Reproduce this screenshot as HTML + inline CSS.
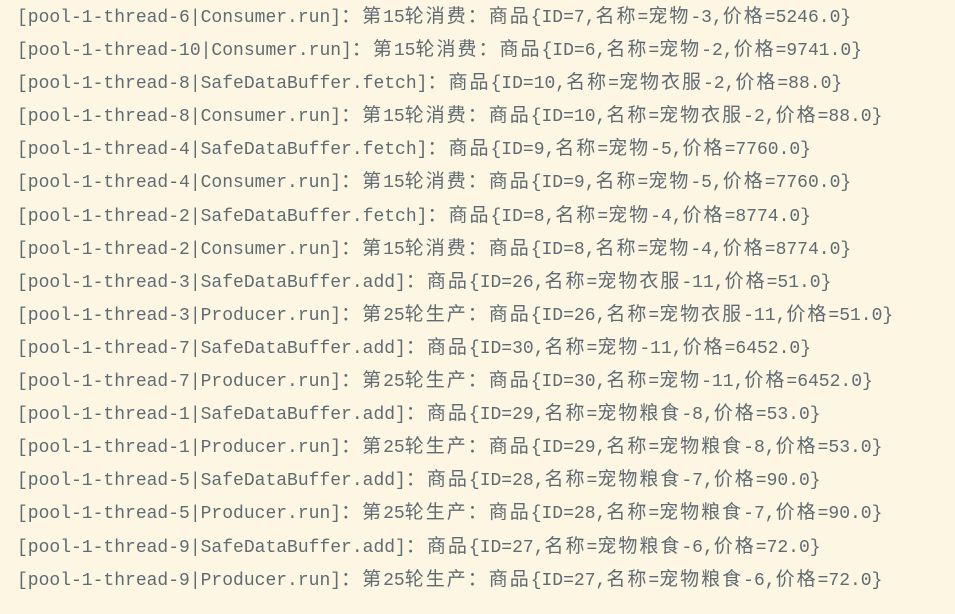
<!DOCTYPE html>
<html><head><meta charset="utf-8"><style>
html,body{margin:0;padding:0;background:#fdf6e3;width:955px;height:614px;overflow:hidden}
.w{position:absolute;left:17px;top:2px;font-family:"Liberation Mono","Noto Sans CJK SC",monospace;font-size:18px;color:#5f6b73}
.w div{height:33.1px;line-height:33px;white-space:nowrap}
.c{font-family:"Noto Sans CJK SC","WenQuanYi Zen Hei",sans-serif;font-size:19px;letter-spacing:2px;line-height:0}
</style></head><body><div class="w">
<div>[pool-1-thread-6|Consumer.run]<span class="c">：第</span>15<span class="c">轮消费：商品</span>{ID=7,<span class="c">名称</span>=<span class="c">宠物</span>-3,<span class="c">价格</span>=5246.0}</div>
<div>[pool-1-thread-10|Consumer.run]<span class="c">：第</span>15<span class="c">轮消费：商品</span>{ID=6,<span class="c">名称</span>=<span class="c">宠物</span>-2,<span class="c">价格</span>=9741.0}</div>
<div>[pool-1-thread-8|SafeDataBuffer.fetch]<span class="c">：商品</span>{ID=10,<span class="c">名称</span>=<span class="c">宠物衣服</span>-2,<span class="c">价格</span>=88.0}</div>
<div>[pool-1-thread-8|Consumer.run]<span class="c">：第</span>15<span class="c">轮消费：商品</span>{ID=10,<span class="c">名称</span>=<span class="c">宠物衣服</span>-2,<span class="c">价格</span>=88.0}</div>
<div>[pool-1-thread-4|SafeDataBuffer.fetch]<span class="c">：商品</span>{ID=9,<span class="c">名称</span>=<span class="c">宠物</span>-5,<span class="c">价格</span>=7760.0}</div>
<div>[pool-1-thread-4|Consumer.run]<span class="c">：第</span>15<span class="c">轮消费：商品</span>{ID=9,<span class="c">名称</span>=<span class="c">宠物</span>-5,<span class="c">价格</span>=7760.0}</div>
<div>[pool-1-thread-2|SafeDataBuffer.fetch]<span class="c">：商品</span>{ID=8,<span class="c">名称</span>=<span class="c">宠物</span>-4,<span class="c">价格</span>=8774.0}</div>
<div>[pool-1-thread-2|Consumer.run]<span class="c">：第</span>15<span class="c">轮消费：商品</span>{ID=8,<span class="c">名称</span>=<span class="c">宠物</span>-4,<span class="c">价格</span>=8774.0}</div>
<div>[pool-1-thread-3|SafeDataBuffer.add]<span class="c">：商品</span>{ID=26,<span class="c">名称</span>=<span class="c">宠物衣服</span>-11,<span class="c">价格</span>=51.0}</div>
<div>[pool-1-thread-3|Producer.run]<span class="c">：第</span>25<span class="c">轮生产：商品</span>{ID=26,<span class="c">名称</span>=<span class="c">宠物衣服</span>-11,<span class="c">价格</span>=51.0}</div>
<div>[pool-1-thread-7|SafeDataBuffer.add]<span class="c">：商品</span>{ID=30,<span class="c">名称</span>=<span class="c">宠物</span>-11,<span class="c">价格</span>=6452.0}</div>
<div>[pool-1-thread-7|Producer.run]<span class="c">：第</span>25<span class="c">轮生产：商品</span>{ID=30,<span class="c">名称</span>=<span class="c">宠物</span>-11,<span class="c">价格</span>=6452.0}</div>
<div>[pool-1-thread-1|SafeDataBuffer.add]<span class="c">：商品</span>{ID=29,<span class="c">名称</span>=<span class="c">宠物粮食</span>-8,<span class="c">价格</span>=53.0}</div>
<div>[pool-1-thread-1|Producer.run]<span class="c">：第</span>25<span class="c">轮生产：商品</span>{ID=29,<span class="c">名称</span>=<span class="c">宠物粮食</span>-8,<span class="c">价格</span>=53.0}</div>
<div>[pool-1-thread-5|SafeDataBuffer.add]<span class="c">：商品</span>{ID=28,<span class="c">名称</span>=<span class="c">宠物粮食</span>-7,<span class="c">价格</span>=90.0}</div>
<div>[pool-1-thread-5|Producer.run]<span class="c">：第</span>25<span class="c">轮生产：商品</span>{ID=28,<span class="c">名称</span>=<span class="c">宠物粮食</span>-7,<span class="c">价格</span>=90.0}</div>
<div>[pool-1-thread-9|SafeDataBuffer.add]<span class="c">：商品</span>{ID=27,<span class="c">名称</span>=<span class="c">宠物粮食</span>-6,<span class="c">价格</span>=72.0}</div>
<div>[pool-1-thread-9|Producer.run]<span class="c">：第</span>25<span class="c">轮生产：商品</span>{ID=27,<span class="c">名称</span>=<span class="c">宠物粮食</span>-6,<span class="c">价格</span>=72.0}</div>
</div></body></html>
